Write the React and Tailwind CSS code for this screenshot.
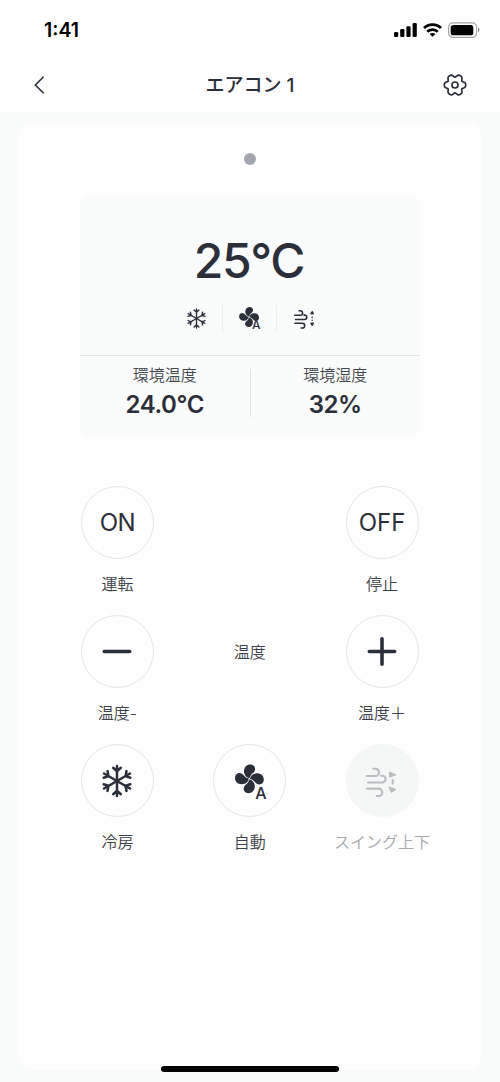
import clsx from "clsx";

const gearPath =
    Array.from({ length: 72 }, (_, i) => {
        const a = (i / 72) * Math.PI * 2;
        const r = 9.6 + 1.4 * Math.cos(6 * a) - 0.3 * Math.cos(12 * a);
        return `${i === 0 ? "M" : "L"}${(12 + r * Math.cos(a)).toFixed(2)} ${(12 + r * Math.sin(a)).toFixed(2)}`;
    }).join(" ") + "Z";

const GearIcon = () => (
    <svg viewBox="0 0 24 24" className="size-6" fill="none" stroke="currentColor" strokeWidth="1.7" strokeLinejoin="round">
        <path d={gearPath} />
        <circle cx="12" cy="12" r="3" />
    </svg>
);

const SnowIcon = ({ className, strokeWidth = 2.5 }) => (
    <svg viewBox="-18 -18 36 36" className={className} fill="none" stroke="currentColor" strokeWidth={strokeWidth} strokeLinecap="round">
        {[0, 60, 120, 180, 240, 300].map((deg) => (
            <path key={deg} transform={`rotate(${deg})`} d="M0 0V-15M-3.8 -13.2L0 -9.8L3.8 -13.2" />
        ))}
    </svg>
);

const FanIcon = ({ className }) => (
    <svg viewBox="-18 -18 36 36" className={className} fill="currentColor">
        {[0, 90, 180, 270].map((deg) => (
            <path
                key={deg}
                transform={`translate(-0.6 -2.2) rotate(${deg})`}
                d="M0.3 -0.6C-3 -0.9 -4.6 -3.2 -5.3 -6C-6.2 -11 -3 -14.4 0.8 -14.4C5.2 -14.4 6.8 -10.2 5 -7.4C3.4 -5 1 -4.7 0.3 -0.6Z"
            />
        ))}
    </svg>
);

const AutoFan = ({ small }) => (
    <span className="relative flex">
        <FanIcon className={small ? "size-[25px]" : "size-9"} />
        <span
            className={clsx(
                "absolute font-medium leading-none",
                small ? "left-[15px] top-[13px] text-[12px]" : "left-[23.5px] top-[22px] text-[16px]"
            )}
        >
            A
        </span>
    </span>
);

const SwingIcon = ({ className, vertical }) => (
    <svg viewBox="-18 -18 36 36" className={className} fill="none" stroke="currentColor" strokeWidth={vertical ? 2.4 : 2.1} strokeLinecap="round">
        <path d="M-15.3 -5H-6.6A3.6 3.6 0 0 0 -6.6 -12.2H-8.6" />
        <path d="M-14 1.5H0.2A3.4 3.4 0 0 0 0.2 -5.3H-1" />
        <path d="M-15 7.6H-3.4A3.7 3.7 0 0 1 -3.4 15H-5.2" />
        {vertical ? (
            <path d="M12 -10.5L13.6 -7.5H10.4ZM12 10.5L13.6 7.5H10.4ZM12 -2V-1.6M12 2.6V2.8" fill="currentColor" strokeLinejoin="round" />
        ) : (
            <>
                <path d="M10.7 -1V2.6" />
                <path d="M7.8 -8.8L14 -6.2L8 -4ZM7.2 6L14 8.4L9.6 11.2Z" fill="currentColor" strokeWidth="1" strokeLinejoin="round" />
            </>
        )}
    </svg>
);

const StatusBar = () => (
    <div className="flex h-[60px] items-center justify-between pl-11 pr-[20px] text-black">
        <span className="mt-px text-[19.5px] font-semibold">1:41</span>
        <div className="flex items-center gap-[6px]">
            <svg viewBox="0 0 23 14" className="h-[14px] w-[23px]" fill="currentColor">
                <rect x="0" y="9" width="4.2" height="5" rx="1.2" />
                <rect x="6.2" y="6" width="4.2" height="8" rx="1.2" />
                <rect x="12.4" y="3.2" width="4.2" height="10.8" rx="1.2" />
                <rect x="18.6" y="0" width="4.2" height="14" rx="1.2" />
            </svg>
            <svg viewBox="0 0 19 14" className="h-[14px] w-[19px]" fill="none" stroke="currentColor" strokeWidth="2.8">
                <path d="M1 5C5.5 0.4 13.5 0.4 18 5" />
                <path d="M4.2 8.7C7 5.8 12 5.8 14.8 8.7" />
                <path d="M9.5 13.8L6.6 11C8.2 9.7 10.8 9.7 12.4 11Z" fill="currentColor" stroke="none" />
            </svg>
            <svg viewBox="0 0 32 16" className="h-[16px] w-[32px]">
                <rect x="0.6" y="0.9" width="28" height="14.4" rx="4.3" fill="none" stroke="#a3a3a3" strokeWidth="1.2" />
                <rect x="2.7" y="2.9" width="22.6" height="10.4" rx="2.6" fill="#000" />
                <path d="M30 5.5C31.8 6.2 31.8 9.8 30 10.5Z" fill="#8a8a8a" />
            </svg>
        </div>
    </div>
);

const Header = () => (
    <div className="flex h-[51px] items-center justify-between px-[33px] pb-px">
        <button className="flex size-6 items-center">
            <svg viewBox="0 0 12 20" className="h-5 w-3" fill="none" stroke="currentColor" strokeWidth="1.6">
                <path d="M10.6 1.8L2.4 10L10.6 18.2" />
            </svg>
        </button>
        <h1 className="pt-[3px] text-[19px] font-medium">エアコン 1</h1>
        <button>
            <GearIcon />
        </button>
    </div>
);

const Reading = ({ label, value }) => (
    <div className="flex flex-1 flex-col items-center pt-[7px]">
        <span className="text-[16px] font-[350] leading-6 text-[#45484f]">{label}</span>
        <span className="mt-[2px] text-[24px] font-semibold leading-8 tracking-[-0.4px]">{value}</span>
    </div>
);

const Control = ({ label, disabled, children }) => (
    <div className={clsx("flex h-[129px] flex-col items-center", disabled ? "text-[#b9bcc0]" : "text-[#2b2f3a]")}>
        <button
            className={clsx(
                "flex size-[73px] items-center justify-center rounded-full border text-[24px] font-normal",
                disabled ? "border-[#f5f6f6] bg-[#f5f6f6]" : "border-[#e3e4e6] bg-[#fefefe]"
            )}
        >
            {children}
        </button>
        <span className={clsx("mt-[13px] whitespace-nowrap text-[16px] font-[350] leading-6", disabled ? "text-[#a5a7aa]" : "text-[#3c3f47]")}>
            {label}
        </span>
    </div>
);

const App = () => {
    return (
        <div className="relative h-[1082px] w-[500px] overflow-hidden bg-[#fafcfc] font-['Inter','Noto_Sans_CJK_JP',sans-serif] text-[#2b2f3a]">
            <div className="bg-[#fefefe]">
                <StatusBar />
                <Header />
            </div>

            <div className="mx-[19px] mt-3 flex h-[947px] flex-col items-center rounded-xl bg-[#fefefe]">
                {/* Status dot */}
                <div className="mt-[30px] size-3 rounded-full bg-[#a3a7b0]" />

                <div className="mt-[30px] h-[242px] w-[340px] rounded-xl bg-[#fafbfb]">
                    <div className="flex h-[161px] flex-col items-center border-b border-[#e3e5e6] pt-[36px]">
                        <div className="pr-[2px] text-[48px] font-medium leading-[60px] tracking-[-1.3px]">25°C</div>
                        <div className="mt-[14px] flex h-[27px] items-center divide-x divide-[#eceeee]">
                            <div className="flex h-full w-[54px] items-center justify-center pl-[2px]">
                                <SnowIcon className="size-[23px]" strokeWidth={2.2} />
                            </div>
                            <div className="flex h-full w-[54px] items-center justify-center">
                                <AutoFan small />
                            </div>
                            <div className="flex h-full w-[54px] items-center justify-center">
                                <SwingIcon className="size-[23px]" vertical />
                            </div>
                        </div>
                    </div>
                    <div className="flex">
                        <Reading label="環境温度" value="24.0°C" />
                        <div className="mt-[13px] h-[48px] w-px bg-[#dfe1e3]" />
                        <Reading label="環境湿度" value="32%" />
                    </div>
                </div>

                <div className="mr-[0.5px] mt-[49px] grid w-[397px] grid-cols-3">
                    <Control label="運転">
                        <span className="tracking-[-0.5px]">ON</span>
                    </Control>
                    <div />
                    <Control label="停止">OFF</Control>

                    <Control label="温度-">
                        <svg viewBox="0 0 30 30" className="size-[30px]" stroke="currentColor" strokeWidth="3.6" strokeLinecap="round">
                            <path d="M2.3 14.5H27.7" />
                        </svg>
                    </Control>
                    <div className="flex h-[73px] items-center justify-center text-[16px] font-[350] text-[#3c3f47]">温度</div>
                    <Control label="温度＋">
                        <svg viewBox="0 0 30 30" className="size-[30px]" stroke="currentColor" strokeWidth="3.6" strokeLinecap="round">
                            <path d="M2.3 14.5H27.7M15 1.8V27.2" />
                        </svg>
                    </Control>

                    <Control label="冷房">
                        <SnowIcon className="size-9" />
                    </Control>
                    <Control label="自動">
                        <AutoFan />
                    </Control>
                    <Control label="スイング上下" disabled>
                        <SwingIcon className="size-9" />
                    </Control>
                </div>
            </div>

            {/* Home indicator */}
            <div className="absolute bottom-[10px] left-[161px] h-[6px] w-[178px] rounded-full bg-black" />
        </div>
    );
};

export default App;
